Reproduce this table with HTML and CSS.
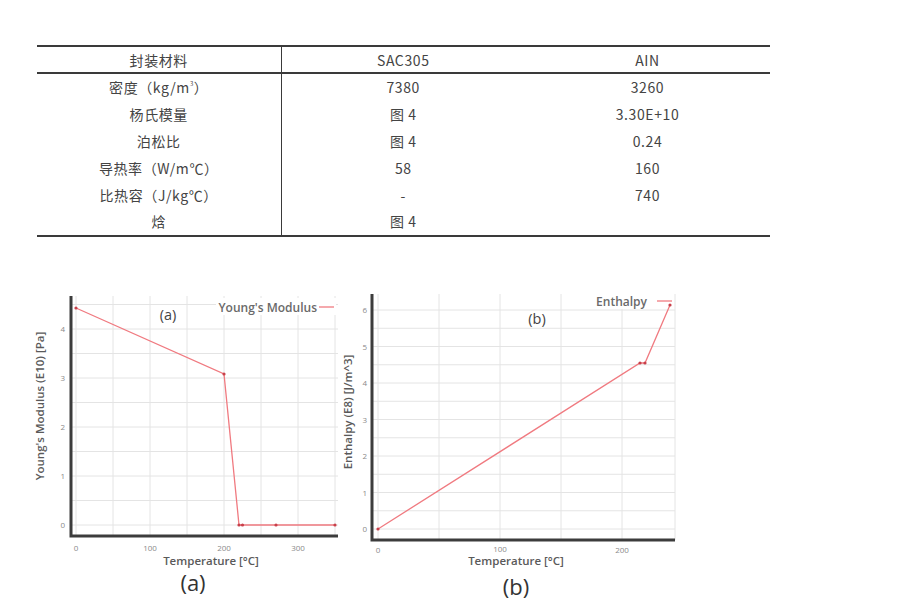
FILE: index.html
```html
<!DOCTYPE html>
<html lang="zh">
<head>
<meta charset="utf-8">
<title>封装材料参数</title>
<link rel="stylesheet" href="styles.css">
</head>
<body>
<div class="page">
  <table class="props">
    <colgroup><col class="c1"><col class="c2"><col class="c3"></colgroup>
    <thead>
      <tr><th>封装材料</th><th>SAC305</th><th>AIN</th></tr>
    </thead>
    <tbody>
      <tr><td>密度（kg/m<sup>3</sup>）</td><td>7380</td><td>3260</td></tr>
      <tr><td>杨氏模量</td><td>图 4</td><td>3.30E+10</td></tr>
      <tr><td>泊松比</td><td>图 4</td><td>0.24</td></tr>
      <tr><td>导热率（W/m℃）</td><td>58</td><td>160</td></tr>
      <tr><td>比热容（J/kg℃）</td><td>-</td><td>740</td></tr>
      <tr><td>焓</td><td>图 4</td><td></td></tr>
    </tbody>
  </table>

  <div class="figs">
    <svg class="fig fig-a" width="310" height="320" viewBox="0 0 310 320">
      <path class="grid" d="M41 238H308M41 213.5H308M41 189H308M41 164.5H308M41 140H308M41 115.5H308M41 91H308M41 66.5H308M41 42H308M41 17.5H308M46 9V249M83 9V249M120 9V249M157 9V249M194 9V249M231 9V249M268 9V249M305 9V249"/>
      <path class="axis" d="M41 9V249H308"/>
      <g class="tick" text-anchor="end">
        <text x="35" y="241">0</text>
        <text x="35" y="192">1</text>
        <text x="35" y="143">2</text>
        <text x="35" y="94">3</text>
        <text x="35" y="45">4</text>
      </g>
      <g class="tick" text-anchor="middle">
        <text x="46" y="264">0</text>
        <text x="120" y="264">100</text>
        <text x="194" y="264">200</text>
        <text x="268" y="264">300</text>
      </g>
      <text class="ax-title" x="181" y="278" text-anchor="middle">Temperature [°C]</text>
      <text class="ax-title" transform="translate(14 119) rotate(-90)" text-anchor="middle">Young's Modulus (E10) [Pa]</text>
      <rect x="186" y="11" width="120" height="17" fill="#fff"/>
      <text class="legend" x="287" y="25" text-anchor="end">Young's Modulus</text>
      <path class="data" d="M289 20H304"/>
      <text class="inlabel" x="138" y="33" text-anchor="middle">(a)</text>
      <path class="data" d="M46 21L194 87L209 238L305 238"/>
      <g class="mk">
        <circle cx="46" cy="21" r="1.6"/>
        <circle cx="194" cy="87" r="1.6"/>
        <circle cx="209" cy="238" r="1.6"/>
        <circle cx="212.5" cy="238" r="1.6"/>
        <circle cx="246" cy="238" r="1.6"/>
        <circle cx="305" cy="238" r="1.6"/>
      </g>
      <text class="caption" x="163" y="304" text-anchor="middle">(a)</text>
    </svg>

    <svg class="fig fig-b" width="360" height="320" viewBox="0 0 360 320">
      <path class="grid" d="M32 242H335M32 223.75H335M32 205.5H335M32 187.25H335M32 169H335M32 150.75H335M32 132.5H335M32 114.25H335M32 96H335M32 77.75H335M32 59.5H335M32 41.25H335M32 23H335M38 7V253M99 7V253M160 7V253M221 7V253M282 7V253M335 7V253"/>
      <path class="axis" d="M32 7V253H335"/>
      <g class="tick" text-anchor="end">
        <text x="27" y="245">0</text>
        <text x="27" y="208.5">1</text>
        <text x="27" y="172">2</text>
        <text x="27" y="135.5">3</text>
        <text x="27" y="99">4</text>
        <text x="27" y="62.5">5</text>
        <text x="27" y="26">6</text>
      </g>
      <g class="tick" text-anchor="middle">
        <text x="38" y="266">0</text>
        <text x="160" y="265">100</text>
        <text x="282" y="266">200</text>
      </g>
      <text class="ax-title" x="176" y="278" text-anchor="middle">Temperature [°C]</text>
      <text class="ax-title" transform="translate(12 125) rotate(-90)" text-anchor="middle">Enthalpy (E8) [J/m^3]</text>
      <rect x="250" y="5" width="84" height="17" fill="#fff"/>
      <text class="legend" x="307" y="19" text-anchor="end">Enthalpy</text>
      <path class="data" d="M317 14H332"/>
      <text class="inlabel" x="197" y="37" text-anchor="middle">(b)</text>
      <path class="data" d="M38 242L300 76L305 76L330 18"/>
      <g class="mk">
        <circle cx="38" cy="242" r="1.6"/>
        <circle cx="300" cy="76" r="1.6"/>
        <circle cx="305" cy="76" r="1.6"/>
        <circle cx="330" cy="18" r="1.6"/>
      </g>
      <text class="caption" x="176" y="308" text-anchor="middle">(b)</text>
    </svg>
  </div>
</div>
</body>
</html>
```

FILE: styles.css
```css
html, body {
  margin: 0;
  padding: 0;
  background: #ffffff;
}

.page {
  width: 900px;
  height: 610px;
  overflow: hidden;
  padding-top: 45px;
  box-sizing: border-box;
}

.props {
  margin-left: 37px;
  width: 733px;
  border-collapse: collapse;
  table-layout: fixed;
  font-family: "Noto Sans CJK SC", "Noto Sans", sans-serif;
  font-size: 14px;
  color: #444444;
  letter-spacing: 0.6px;
}

.props .c1 { width: 244px; }
.props .c2 { width: 244px; }
.props .c3 { width: 245px; }

.props th,
.props td {
  font-weight: normal;
  text-align: center;
  padding: 0;
  line-height: 1;
  height: 26.8px;
}

.props thead tr {
  border-top: 2px solid #3a3a3a;
  border-bottom: 2px solid #3a3a3a;
}

.props thead th { height: 25px; }

.props tbody tr:last-child {
  border-bottom: 2px solid #3a3a3a;
}

.props th:first-child,
.props td:first-child {
  border-right: 1.5px solid #3a3a3a;
}

.props sup {
  font-size: 6px;
  vertical-align: 7px;
}

.figs {
  display: flex;
  margin-top: 50px;
  padding-left: 30px;
}

.fig {
  display: block;
  overflow: visible;
  font-family: "Open Sans", "Noto Sans", sans-serif;
}

.grid {
  fill: none;
  stroke: #e4e4e4;
  stroke-width: 1;
}

.axis {
  fill: none;
  stroke: #3c3c3c;
  stroke-width: 3;
}

.tick {
  font-size: 8px;
  fill: #8a8a8a;
}

.ax-title {
  font-size: 11.5px;
  font-weight: 600;
  fill: #5a5a5a;
}

.legend {
  font-size: 12px;
  font-weight: 600;
  fill: #6a6a6a;
}

.inlabel {
  font-size: 14.5px;
  fill: #444;
}

.data {
  fill: none;
  stroke: #f07a80;
  stroke-width: 1.3;
}

.mk circle {
  fill: #c8404a;
}

.caption {
  font-size: 22px;
  fill: #333;
}
```
